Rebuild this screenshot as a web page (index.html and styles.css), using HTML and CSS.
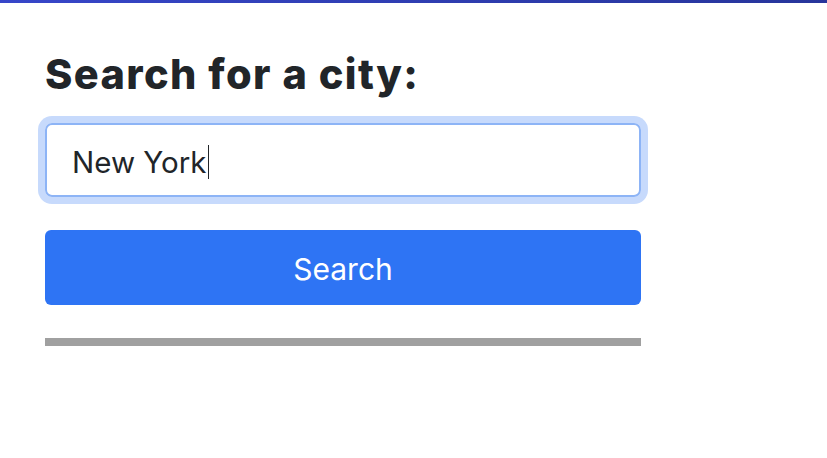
FILE: index.html
```html
<!DOCTYPE html>
<html>
<head>
<meta charset="utf-8">
<link rel="stylesheet" href="styles.css">
</head>
<body>
<div class="topbar"></div>
<main class="wrap">
  <h1 class="title">Search for a city:</h1>
  <div class="field"><span class="value">New York</span><span class="caret"></span></div>
  <button class="btn">Search</button>
  <div class="progress"></div>
</main>
</body>
</html>
```
FILE: styles.css
```css
* { box-sizing: border-box; }
html, body { margin: 0; background: #fff; }
body { font-family: Inter, "Noto Sans", sans-serif; color: #212529; }
.topbar { height: 3px; background: linear-gradient(90deg, #3746c9, #27359b); }
.wrap { width: 596px; margin-left: 45px; display: flex; flex-direction: column; }
.title { margin: 43px 0 0; font-size: 41.5px; font-weight: 800; line-height: 56px; letter-spacing: 1.4px; color: #212529; }
.field {
  margin-top: 21px; height: 74px; border: 2px solid #8db4f6; border-radius: 7px;
  box-shadow: 0 0 0 7px #c7dafc; display: flex; align-items: center; padding: 4px 0 0 25px;
  font-size: 29.5px;
}
.value { color: #212529; }
.caret { width: 1.5px; height: 34px; background: #212529; margin-left: 1px; }
.btn {
  margin-top: 33px; height: 75px; border: none; border-radius: 6px; background: #2e74f4;
  color: #fff; font-family: Inter, "Noto Sans", sans-serif; font-size: 30px; padding: 2px 0 0;
}
.progress { margin-top: 33px; height: 8px; background: #a0a0a0; }
```
